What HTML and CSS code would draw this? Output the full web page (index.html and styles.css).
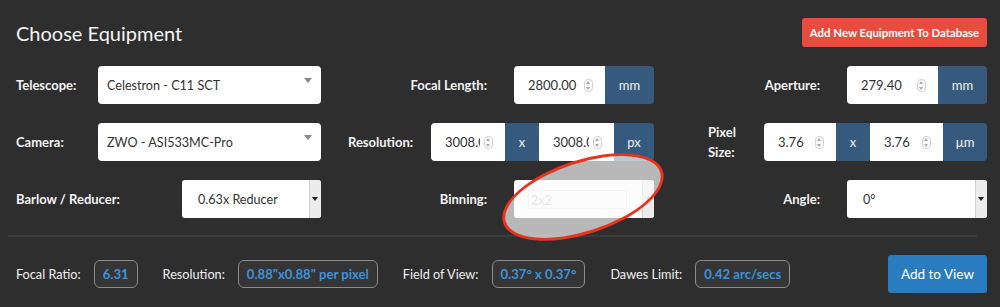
FILE: index.html
```html
<!DOCTYPE html>
<html lang="en">
<head>
  <meta charset="UTF-8">
  <title>Choose Equipment</title>
  <link rel="stylesheet" href="styles.css">
</head>
<body>

  <div class="panel">
    <div class="header">
      <h1>Choose Equipment</h1>
      <button class="btn-red">Add New Equipment To Database</button>
    </div>

    <!-- Row 1 -->
    <div class="row">
      <label class="lbl w-82">Telescope:</label>
      <div class="select w-223"><span>Celestron - C11 SCT</span><i class="caret"></i></div>
      <label class="lbl right w-193">Focal Length:</label>
      <div class="group w-140">
        <div class="num w-91"><span>2800.00</span><b class="spin"></b></div>
        <div class="addon">mm</div>
      </div>
      <label class="lbl right w-193">Aperture:</label>
      <div class="group w-140">
        <div class="num w-91"><span>279.40</span><b class="spin"></b></div>
        <div class="addon">mm</div>
      </div>
    </div>

    <!-- Row 2 -->
    <div class="row">
      <label class="lbl w-82">Camera:</label>
      <div class="select w-223"><span>ZWO - ASI533MC-Pro</span><i class="caret"></i></div>
      <label class="lbl w-110 pad-27">Resolution:</label>
      <div class="group w-223">
        <div class="num w-74"><span>3008.00</span><b class="spin"></b></div>
        <div class="addon w-34">x</div>
        <div class="num w-75"><span>3008.00</span><b class="spin"></b></div>
        <div class="addon w-40">px</div>
      </div>
      <label class="lbl w-110 pad-54 two">Pixel<br>Size:</label>
      <div class="group w-223">
        <div class="num w-72"><span>3.76</span><b class="spin"></b></div>
        <div class="addon w-34">x</div>
        <div class="num w-73"><span>3.76</span><b class="spin"></b></div>
        <div class="addon w-44">µm</div>
      </div>
    </div>

    <!-- Row 3 -->
    <div class="row">
      <label class="lbl w-166">Barlow / Reducer:</label>
      <div class="select boxed w-139"><span>0.63x Reducer</span><i class="btn-caret"></i></div>
      <label class="lbl right w-193">Binning:</label>
      <div class="select boxed disabled w-140"><span class="inner">2x2</span><i class="btn-caret"></i></div>
      <label class="lbl right w-193">Angle:</label>
      <div class="select boxed w-140"><span>0°</span><i class="btn-caret"></i></div>
    </div>

    <hr>

    <div class="results">
      <span class="res-lbl">Focal Ratio:</span>
      <span class="badge">6.31</span>
      <span class="res-lbl">Resolution:</span>
      <span class="badge">0.88"x0.88" per pixel</span>
      <span class="res-lbl">Field of View:</span>
      <span class="badge">0.37° x 0.37°</span>
      <span class="res-lbl">Dawes Limit:</span>
      <span class="badge">0.42 arc/secs</span>
      <button class="btn-blue">Add to View</button>
    </div>

    <!-- annotation -->
    <div class="circle"></div>
  </div>

</body>
</html>
```

FILE: styles.css
```css
html, body {
  margin: 0;
  padding: 0;
  background: #2e2e2e;
  font-family: 'Lato', sans-serif;
  color: #fff;
}

.panel {
  position: relative;
  width: 1000px;
  height: 307px;
  padding: 18px 13px 0 16px;
  box-sizing: border-box;
  overflow: hidden;
}

.header {
  display: flex;
  justify-content: space-between;
  align-items: center;
  height: 29px;
}

h1 {
  margin: 0;
  font-size: 20px;
  font-weight: 400;
  color: #f4f4f4;
}

button {
  font-family: 'Lato', sans-serif;
  border: none;
  color: #fff;
  border-radius: 3px;
}

.btn-red {
  width: 185px;
  height: 29px;
  background: #e74c3c;
  font-size: 11.4px;
  font-weight: 700;
  padding: 0;
}

.row {
  display: flex;
  align-items: center;
  height: 38px;
  margin-top: 19px;
}

.row:first-of-type { margin-top: 20px; }

.lbl {
  font-size: 13px;
  font-weight: 700;
  color: #f2f2f2;
  box-sizing: border-box;
  flex: none;
}

.lbl.right {
  text-align: right;
  padding-right: 27px;
}

.lbl.two { line-height: 20px; }
.pad-27 { padding-left: 27px; }
.pad-54 { padding-left: 54px; }

.w-34 { width: 34px; }
.w-40 { width: 40px; }
.w-44 { width: 44px; }
.w-72 { width: 72px; }
.w-73 { width: 73px; }
.w-74 { width: 74px; }
.w-75 { width: 75px; }
.w-82 { width: 82px; }
.w-91 { width: 91px; }
.w-110 { width: 110px; }
.w-139 { width: 139px; }
.w-140 { width: 140px; }
.w-166 { width: 166px; }
.w-193 { width: 193px; }
.w-223 { width: 223px; }

.select {
  position: relative;
  display: flex;
  align-items: center;
  height: 38px;
  background: #fff;
  border-radius: 4px;
  box-sizing: border-box;
  padding-left: 9px;
  font-size: 12.6px;
  color: #333;
  flex: none;
}

.select .caret {
  position: absolute;
  right: 9px;
  top: 12px;
  border-left: 4px solid transparent;
  border-right: 4px solid transparent;
  border-top: 5px solid #888;
}

.select.boxed {
  padding-left: 16px;
  border-radius: 3px;
}

.btn-caret {
  position: absolute;
  right: 0;
  top: 0;
  bottom: 0;
  width: 11px;
  background: #ececec;
  border-left: 1px solid #cfcfcf;
  border-radius: 0 3px 3px 0;
}

.btn-caret::after {
  content: "";
  position: absolute;
  left: 2px;
  top: 17px;
  border-left: 3px solid transparent;
  border-right: 3px solid transparent;
  border-top: 4px solid #222;
}

.select.disabled { padding-left: 14px; }
.select.disabled .btn-caret::after { border-top-color: #bbb; }

.select .inner {
  width: 99px;
  height: 19px;
  line-height: 19px;
  border: 1px solid #e6e6e6;
  box-sizing: border-box;
  padding-left: 2px;
  color: #bbb;
}

.group {
  display: flex;
  height: 38px;
  border-radius: 4px;
  overflow: hidden;
  flex: none;
}

.num {
  display: flex;
  align-items: center;
  background: #fff;
  box-sizing: border-box;
  padding: 0 12px 0 14px;
  font-size: 13px;
  color: #333;
  flex: none;
}

.num span {
  flex: 1;
  overflow: hidden;
  white-space: nowrap;
}

.spin {
  flex: none;
  width: 7px;
  height: 11px;
  border: 1px solid #d4d4d4;
  border-radius: 4px;
  margin-left: 4px;
  position: relative;
  background: #fafafa;
}

.spin::before,
.spin::after {
  content: "";
  position: absolute;
  left: 1px;
  border-left: 2.5px solid transparent;
  border-right: 2.5px solid transparent;
}

.spin::before { top: 1px; border-bottom: 3px solid #aaa; }
.spin::after { bottom: 1px; border-top: 3px solid #aaa; }

.addon {
  flex: 1;
  display: flex;
  align-items: center;
  justify-content: center;
  background: #365a7e;
  color: #f0f0f0;
  font-size: 13px;
}

.addon.w-34, .addon.w-40, .addon.w-44 { flex: none; }

hr {
  margin: 17px 10px 0 -8px;
  border: none;
  height: 2px;
  background: #3a3a3a;
}

.results {
  display: flex;
  align-items: center;
  margin-top: 18px;
  height: 38px;
}

.res-lbl {
  font-size: 12.7px;
  color: #f0f0f0;
  margin-right: 13px;
}

.badge {
  height: 28px;
  line-height: 26px;
  box-sizing: border-box;
  padding: 0 8px;
  border: 1px solid #8c8c8c;
  border-radius: 6px;
  background: #353535;
  color: #3e92db;
  font-size: 13.1px;
  font-weight: 700;
  margin-right: 25px;
}

.btn-blue {
  margin-left: auto;
  width: 99px;
  height: 38px;
  background: #2a7cc0;
  font-size: 13.5px;
  font-weight: 400;
  padding: 0;
}

.circle {
  position: absolute;
  left: 499px;
  top: 160px;
  width: 168px;
  height: 74px;
  box-sizing: border-box;
  border: 3px solid #e8331f;
  border-radius: 50%;
  background: rgba(250, 250, 250, 0.68);
  transform: rotate(-18deg);
  pointer-events: none;
}
```
